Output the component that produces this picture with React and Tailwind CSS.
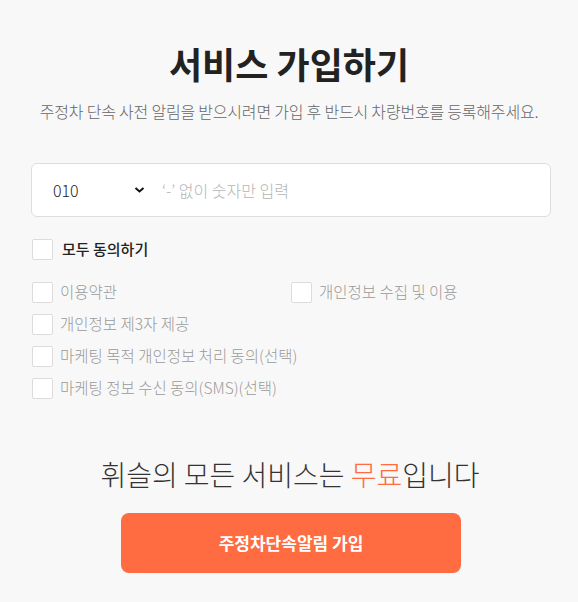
import { useState } from "react";

const terms = [
  { id: "terms", label: "이용약관" },
  { id: "privacy", label: "개인정보 수집 및 이용" },
  { id: "third", label: "개인정보 제3자 제공", full: true },
  { id: "marketing", label: "마케팅 목적 개인정보 처리 동의(선택)", full: true },
  { id: "sms", label: "마케팅 정보 수신 동의(SMS)(선택)", full: true },
];

function Box({ checked, onClick }) {
  return (
    <span
      onClick={onClick}
      className="w-[21px] h-[21px] shrink-0 bg-white border border-[#dcdcdc] rounded-[2px] flex items-center justify-center"
    >
      {checked && (
        <svg width="13" height="13" viewBox="0 0 24 24" fill="none" stroke="#ff6c42" strokeWidth="3">
          <path d="M4 12l5 5L20 6" />
        </svg>
      )}
    </span>
  );
}

export default function App() {
  const [checked, setChecked] = useState({});
  const allOn = terms.every((t) => checked[t.id]);

  const toggleAll = () => {
    const next = {};
    terms.forEach((t) => (next[t.id] = !allOn));
    setChecked(next);
  };

  return (
    <div
      className="min-h-screen bg-[#f8f8f8] pt-[38px] pb-[30px]"
      style={{ fontFamily: '"Noto Sans CJK KR", "Noto Sans", sans-serif' }}
    >
      <h1 className="text-center text-[36px] font-bold text-[#222] leading-[50px]">
        서비스 가입하기
      </h1>
      <p className="text-center text-[16px] font-light text-[#666] mt-[12px] leading-[22px] tracking-[-0.2px]">
        주정차 단속 사전 알림을 받으시려면 가입 후 반드시 차량번호를 등록해주세요.
      </p>

      <div className="ml-[31px] w-[520px] mt-[41px] h-[54px] bg-white border border-[#dedede] rounded-[6px] flex items-center">
        <div className="relative ml-[21px] w-[100px] flex items-center">
          <select className="appearance-none bg-transparent w-full text-[16px] font-light text-[#222] outline-none">
            <option>010</option>
            <option>011</option>
            <option>016</option>
            <option>017</option>
            <option>019</option>
          </select>
          <svg
            className="absolute right-[8px] pointer-events-none"
            width="11"
            height="8"
            viewBox="0 0 11 8"
          >
            <path d="M1.5 2l4 3.5 4-3.5" fill="none" stroke="#111" strokeWidth="2" />
          </svg>
        </div>
        <input
          className="flex-1 ml-[9px] text-[16px] font-light outline-none placeholder:text-[#b5b5b5] bg-transparent"
          placeholder="‘-’ 없이 숫자만 입력"
        />
      </div>

      <div className="mx-[32px] mt-[20px]">
        <label className="flex items-center gap-[9px] h-[24px] cursor-pointer">
          <Box checked={allOn} onClick={toggleAll} />
          <span className="text-[15px] font-medium text-[#222]">모두 동의하기</span>
        </label>

        <div className="mt-[19px] grid grid-cols-[259px_1fr] gap-y-[8px]">
          {terms.map((t) => (
            <label
              key={t.id}
              className={`flex items-center gap-[7px] h-[24px] cursor-pointer ${t.full ? "col-span-2" : ""}`}
            >
              <Box
                checked={!!checked[t.id]}
                onClick={() => setChecked({ ...checked, [t.id]: !checked[t.id] })}
              />
              <span className="text-[15.5px] font-light text-[#9a9a9a]">{t.label}</span>
            </label>
          ))}
        </div>
      </div>

      <p className="text-center text-[28px] font-light text-[#333] mt-[56px] leading-[36px] pl-[2px]">
        휘슬의 모든 서비스는 <span className="text-[#ff6c42]">무료</span>입니다
      </p>

      <div className="flex justify-center mt-[21px] pl-[4px]">
        <button className="w-[340px] h-[60px] bg-[#ff6c42] rounded-[8px] text-white text-[17px] font-bold">
          주정차단속알림 가입
        </button>
      </div>
    </div>
  );
}
